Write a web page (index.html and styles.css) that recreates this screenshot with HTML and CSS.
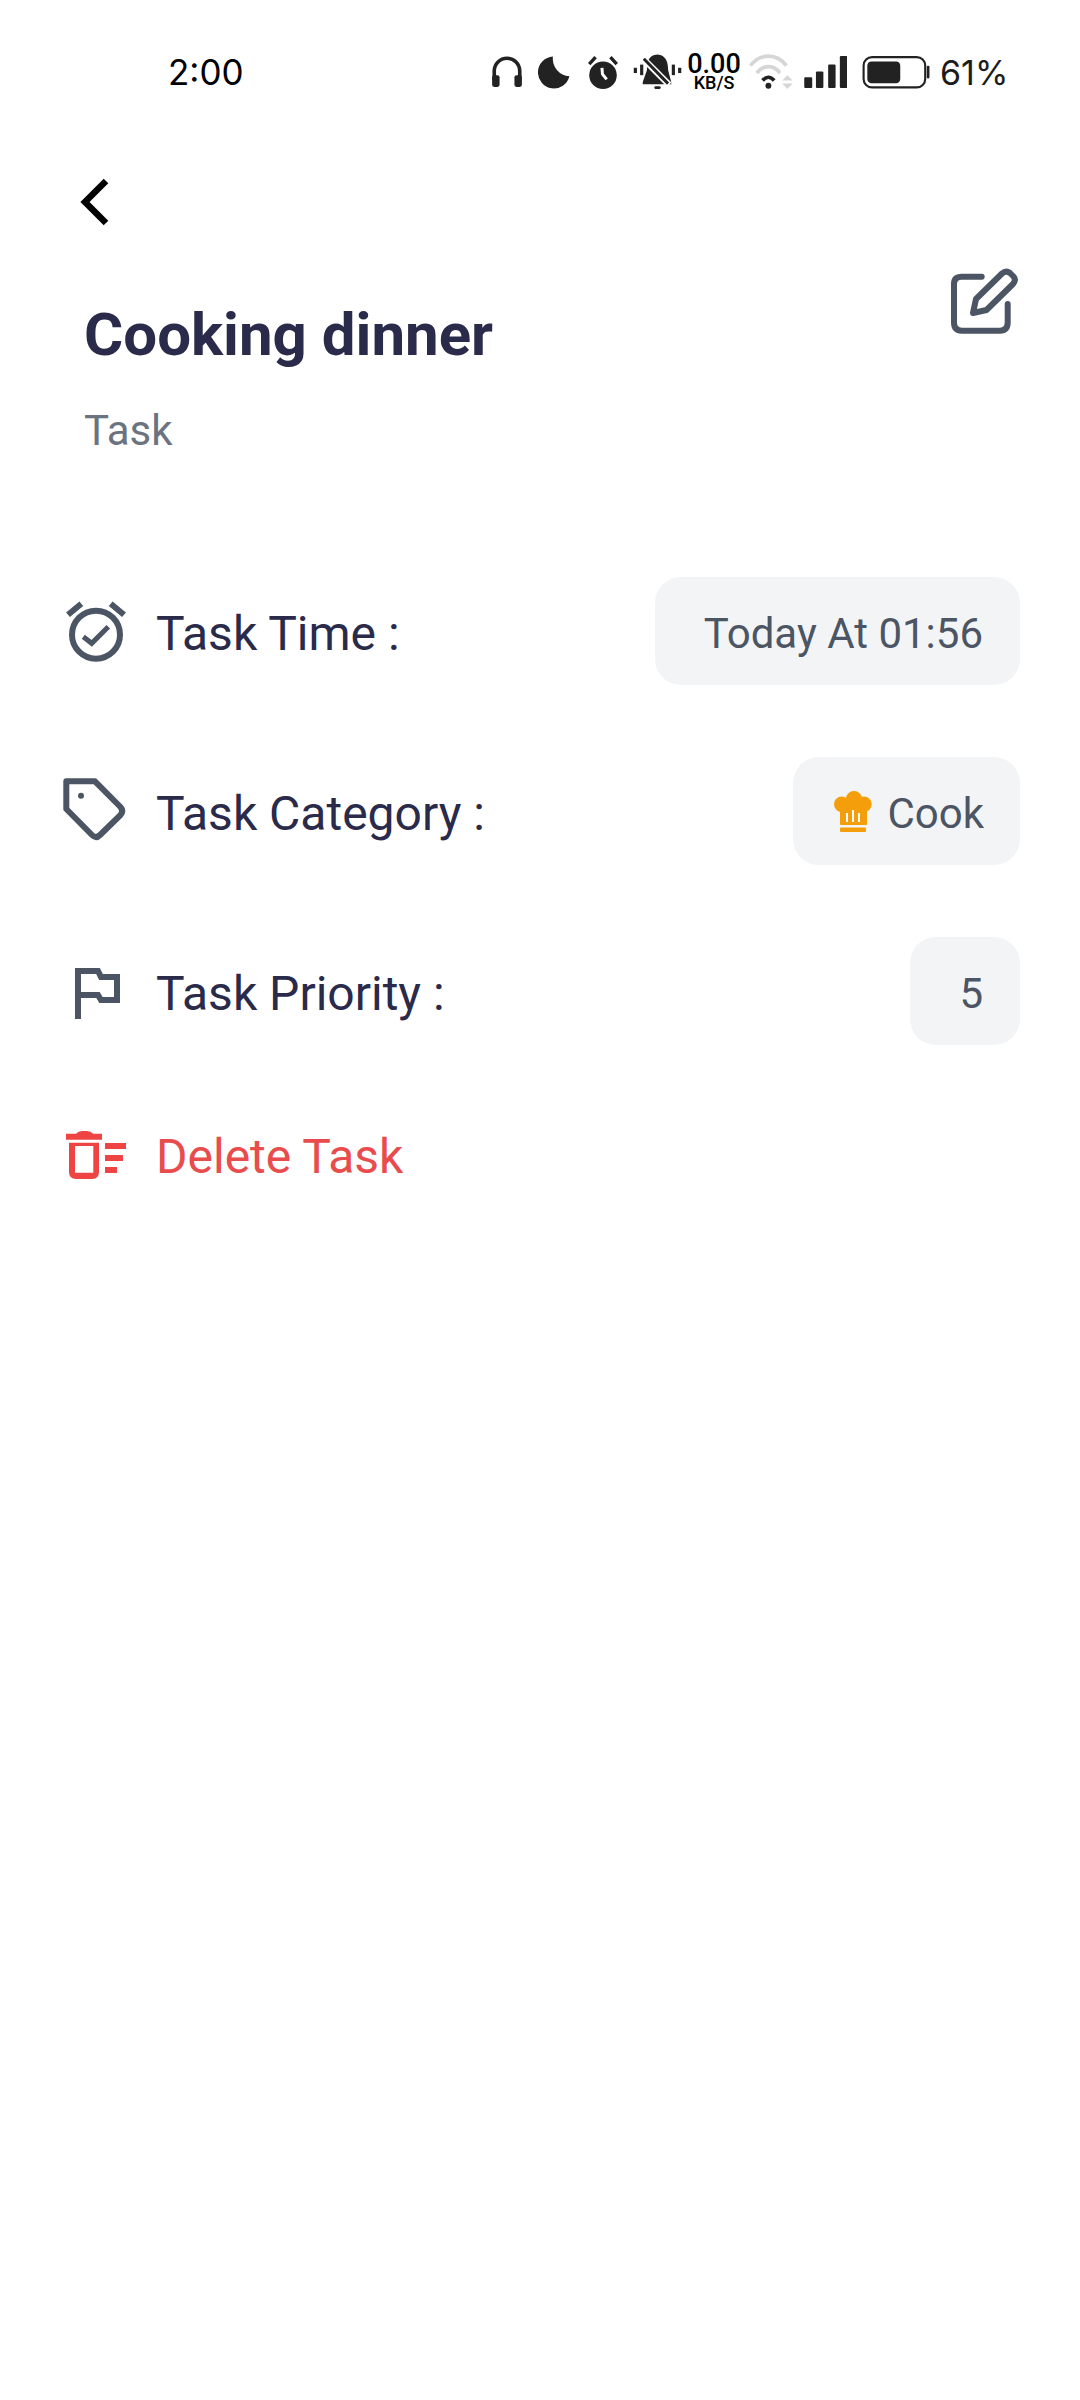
FILE: index.html
```html
<!DOCTYPE html>
<html lang="en">
<head>
    <meta charset="UTF-8">
    <meta name="viewport" content="width=device-width, initial-scale=1.0">
    <title>Task detail</title>
    <link rel="stylesheet" href="styles.css">
</head>
<body>
    <!-- status bar -->
    <div class="status-bar">
        <span class="clock">2:00</span>
        <div class="status-icons">
            <svg class="st-headphones" width="32" height="34" viewBox="490 56 30 32"><path d="M493 80V71a12 12 0 0 1 24 0V80" fill="none" stroke="#222" stroke-width="3.4"/><rect x="491" y="75" width="7" height="11" rx="2" fill="#222"/><rect x="512" y="75" width="7" height="11" rx="2" fill="#222"/></svg>
            <svg class="st-moon" width="32" height="34" viewBox="534 56 30 32"><path d="M548 57.500A15 15 0 1 0 563.500 76A16.500 16.500 0 0 1 548 57.500Z" fill="#222"/></svg>
            <svg class="st-alarm" width="34" height="36" viewBox="578 54 32 34"><circle cx="594" cy="74" r="13" fill="#222"/><path d="M581 63.500L587 57M607 63.500L601 57" stroke="#222" stroke-width="3.200"/><path d="M593 67L593.500 73L597.500 78" fill="none" stroke="#fff" stroke-width="2.800"/></svg>
            <svg class="st-mute" width="50" height="38" viewBox="621 54 47 36"><path d="M645 55.500C636 56 635 63 635 70L631 81.500V83.500H658V81.500L655 70C655 63 653 56 645 55.500Z" fill="#222"/><rect x="642" y="85.500" width="6" height="2.500" rx="1" fill="#222"/><path d="M631 59L656 84" stroke="#fff" stroke-width="6"/><path d="M632 59.500L655 83" stroke="#222" stroke-width="2.800"/><rect x="622.500" y="68" width="3" height="5" fill="#222"/><rect x="628.500" y="65" width="3" height="10" fill="#222"/><rect x="658.500" y="65" width="3" height="10" fill="#222"/><rect x="664.500" y="68" width="3" height="5" fill="#222"/></svg>
            <div class="net-speed">
                <span class="net-value">0.00</span>
                <span class="net-unit">KB/S</span>
            </div>
            <svg class="st-wifi" width="45" height="38" viewBox="730 54 42 36"><path d="M732 66C741 54 757 54 766 66" fill="none" stroke="#d6d6d6" stroke-width="3.600"/><path d="M738 73C744 65 754 65 760 73" fill="none" stroke="#d6d6d6" stroke-width="3.600"/><path d="M743.500 80C747 76 751 76 754.500 80" fill="none" stroke="#222" stroke-width="3.400"/><circle cx="749" cy="85" r="2.800" fill="#222"/><path d="M762 80L767 75L772 80ZM762 83L767 88L772 83Z" fill="#d6d6d6"/></svg>
            <svg class="st-signal" width="43" height="34" viewBox="782 56 40 32" fill="#222"><rect x="782" y="77" width="7.500" height="10" rx="1"/><rect x="793" y="71.500" width="7" height="15.500" rx="1"/><rect x="804.500" y="65" width="7" height="22" rx="1"/><rect x="815.500" y="57" width="7" height="30" rx="1"/></svg>
            <svg class="st-battery" width="68" height="34" viewBox="837 56 63 32"><rect x="838" y="58" width="58" height="28.500" rx="8" fill="none" stroke="#222" stroke-width="2"/><rect x="841.500" y="62" width="31" height="20.500" rx="4" fill="#222"/><rect x="897.500" y="66" width="2.500" height="12" rx="1" fill="#222"/></svg>
            <span class="battery-pct">61%</span>
        </div>
    </div>

    <!-- back button -->
    <div class="top-nav">
        <svg width="34" height="52" viewBox="0 0 34 52"><path d="M28 5L7 26L28 47" fill="none" stroke="#000" stroke-width="6.500"/></svg>
    </div>

    <!-- title -->
    <div class="task-head">
        <div>
            <h1 class="task-title">Cooking dinner</h1>
            <p class="task-kind">Task</p>
        </div>
        <svg class="edit-icon" width="72" height="72" viewBox="0 0 72 72"><path d="M33.700 12.700H13.700Q6 12.700 6 20V58.300Q6 66.700 13.700 66.700H52Q59.700 66.700 59.700 58.300V40" fill="none" stroke="#4b5563" stroke-width="6" stroke-linecap="round"/><path d="M25 49L28 35L54 9.500Q58 6 62 9L65.500 12.500Q68.500 16 65 20L38.500 46Z" fill="none" stroke="#4b5563" stroke-width="6" stroke-linejoin="round"/></svg>
    </div>

    <!-- task fields -->
    <div class="fields">
        <div class="field">
            <svg class="field-icon" width="72" height="72" viewBox="0 0 72 72"><circle cx="36" cy="39.700" r="24" fill="none" stroke="#4b5563" stroke-width="6"/><path d="M8 19.700L21.300 8.700M64 19.700L50.700 8.700" stroke="#4b5563" stroke-width="6"/><path d="M23.300 41.700L31.700 48.300L48.300 31.700" fill="none" stroke="#4b5563" stroke-width="5"/></svg>
            <span class="field-label">Task Time :</span>
            <span class="chip">Today At 01:56</span>
        </div>
        <div class="field">
            <svg class="field-icon" width="72" height="72" viewBox="0 0 72 72"><path d="M6.300 6.300H35L60.500 32Q64 36 60.500 40L40 60Q36 64 32 60L6.300 34Z" fill="none" stroke="#4b5563" stroke-width="6" stroke-linejoin="round"/><circle cx="21" cy="20.700" r="3" fill="#4b5563"/></svg>
            <span class="field-label">Task Category :</span>
            <span class="chip chip-cat">
                <svg class="cat-icon" width="38" height="41" viewBox="0 0 38 41"><circle cx="20" cy="8.300" r="8.300" fill="#f59e0b"/><circle cx="7.700" cy="13.300" r="7.700" fill="#f59e0b"/><circle cx="30" cy="13.300" r="7.700" fill="#f59e0b"/><rect x="6" y="12" width="27" height="22" rx="1" fill="#f59e0b"/><path d="M13 31V22M19 31V19M25 31V22" stroke="#fff" stroke-width="2"/><rect x="6" y="36.500" width="26" height="4.500" rx="1" fill="#f59e0b"/></svg>
                Cook
            </span>
        </div>
        <div class="field">
            <svg class="field-icon" width="72" height="72" viewBox="0 0 72 72"><path d="M18 64V16H38L41 22H57V45H41L38 40H18" fill="none" stroke="#4b5563" stroke-width="6"/></svg>
            <span class="field-label">Task Priority :</span>
            <span class="chip">5</span>
        </div>
    </div>

    <!-- delete -->
    <div class="delete-row">
        <svg class="field-icon" width="72" height="72" viewBox="0 0 72 72" fill="#ef4444"><path d="M6 19.700V13.700H16Q18 11 22 11H27Q31 11 33 13.700H42V19.700Z"/><path d="M9 22.700H39V52Q39 59 32 59H16Q9 59 9 52ZM15 26V52.700H33.300V26Z" fill-rule="evenodd"/><rect x="45" y="23" width="21" height="6"/><rect x="45" y="35" width="18" height="6"/><rect x="45" y="47" width="12" height="6"/></svg>
        <span class="delete-label">Delete Task</span>
    </div>
</body>
</html>
```

FILE: styles.css
```css
/* page */
body, html {
    margin: 0;
    padding: 0;
    width: 100%;
    height: 100%;
    background: #fff;
    overflow: hidden;
    font-family: Roboto, Arial, sans-serif;
}

/* status bar */
.status-bar {
    display: flex;
    align-items: center;
    justify-content: space-between;
    height: 72px;
    padding: 36px 74px 0 168px;
    color: #1c1c1c;
}

.clock {
    font-family: Inter, sans-serif;
    font-size: 35px;
    color: #000;
}

.status-icons {
    display: flex;
    align-items: center;
}

.status-icons svg {
    display: block;
    flex: none;
}

.st-moon {
    margin-left: 15px;
}

.st-alarm {
    margin-left: 16px;
}

.st-mute {
    margin-left: 12px;
}

.net-speed {
    display: flex;
    flex-direction: column;
    align-items: center;
    width: 52px;
    margin-left: 6px;
    color: #000;
    font-family: Roboto, sans-serif;
    font-weight: 500;
}

.net-value {
    font-size: 27px;
    line-height: 21px;
}

.net-unit {
    font-size: 18px;
    line-height: 15px;
}

.st-wifi {
    margin-left: 8px;
}

.st-signal {
    margin-left: 11px;
}

.st-battery {
    margin-left: 15px;
}

.battery-pct {
    margin-left: 10px;
    font-family: Inter, sans-serif;
    font-size: 34px;
    width: 66px;
    white-space: nowrap;
}

/* back button */
.top-nav {
    height: 52px;
    padding: 68px 0 0 78px;
}

.top-nav svg {
    display: block;
}

/* title */
.task-head {
    display: flex;
    justify-content: space-between;
    align-items: flex-start;
    padding: 36px 60px 0 84px;
}

.task-title {
    margin: 36px 0 0;
    font-size: 60px;
    line-height: 70px;
    font-weight: 700;
    color: #2a2a4a;
}

.task-kind {
    margin: 36px 0 0;
    font-size: 42px;
    line-height: 50px;
    color: #6b7280;
}

.edit-icon {
    display: block;
}

/* field rows */
.fields {
    display: flex;
    flex-direction: column;
    gap: 72px;
    padding: 0 60px;
    margin-top: 121px;
}

.field {
    display: flex;
    align-items: center;
    height: 108px;
}

.field-icon {
    display: block;
    flex: none;
    margin-right: 24px;
}

.field-label {
    flex: 1;
    padding-top: 4px;
    font-size: 48px;
    color: #2a2a4a;
}

.chip {
    display: flex;
    align-items: center;
    box-sizing: border-box;
    height: 108px;
    padding: 4px 37px 0 49px;
    background: #f3f4f6;
    border-radius: 26px;
    font-size: 42px;
    color: #4b5563;
}

.chip-cat {
    padding-left: 41px;
    padding-right: 36px;
}

.cat-icon {
    display: block;
    margin: -4px 15px 0 0;
}

/* delete */
.delete-row {
    display: flex;
    align-items: center;
    height: 72px;
    padding: 0 60px;
    margin-top: 75px;
}

.delete-label {
    font-size: 48px;
    color: #e84c4c;
}
```
